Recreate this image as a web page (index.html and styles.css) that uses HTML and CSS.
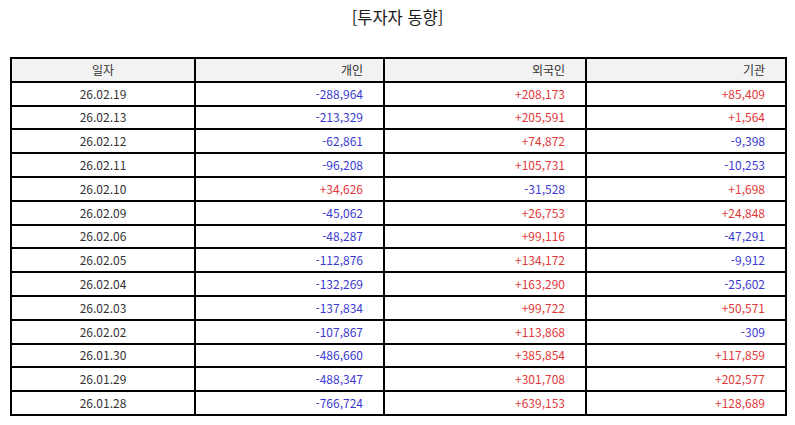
FILE: index.html
```html
<!DOCTYPE html>
<html lang="ko">
<head>
<meta charset="utf-8">
<link rel="stylesheet" href="styles.css">
</head>
<body>
<div class="page">
  <h1 class="title">[투자자 동향]</h1>
  <table class="grid">
    <colgroup>
      <col class="c1"><col class="c2"><col class="c3"><col class="c4">
    </colgroup>
    <thead>
      <tr><th class="date">일자</th><th>개인</th><th>외국인</th><th>기관</th></tr>
    </thead>
    <tbody>
      <tr><td class="date">26.02.19</td><td class="dn">-288,964</td><td class="up">+208,173</td><td class="up">+85,409</td></tr>
      <tr><td class="date">26.02.13</td><td class="dn">-213,329</td><td class="up">+205,591</td><td class="up">+1,564</td></tr>
      <tr><td class="date">26.02.12</td><td class="dn">-62,861</td><td class="up">+74,872</td><td class="dn">-9,398</td></tr>
      <tr><td class="date">26.02.11</td><td class="dn">-96,208</td><td class="up">+105,731</td><td class="dn">-10,253</td></tr>
      <tr><td class="date">26.02.10</td><td class="up">+34,626</td><td class="dn">-31,528</td><td class="up">+1,698</td></tr>
      <tr><td class="date">26.02.09</td><td class="dn">-45,062</td><td class="up">+26,753</td><td class="up">+24,848</td></tr>
      <tr><td class="date">26.02.06</td><td class="dn">-48,287</td><td class="up">+99,116</td><td class="dn">-47,291</td></tr>
      <tr><td class="date">26.02.05</td><td class="dn">-112,876</td><td class="up">+134,172</td><td class="dn">-9,912</td></tr>
      <tr><td class="date">26.02.04</td><td class="dn">-132,269</td><td class="up">+163,290</td><td class="dn">-25,602</td></tr>
      <tr><td class="date">26.02.03</td><td class="dn">-137,834</td><td class="up">+99,722</td><td class="up">+50,571</td></tr>
      <tr><td class="date">26.02.02</td><td class="dn">-107,867</td><td class="up">+113,868</td><td class="dn">-309</td></tr>
      <tr><td class="date">26.01.30</td><td class="dn">-486,660</td><td class="up">+385,854</td><td class="up">+117,859</td></tr>
      <tr><td class="date">26.01.29</td><td class="dn">-488,347</td><td class="up">+301,708</td><td class="up">+202,577</td></tr>
      <tr><td class="date">26.01.28</td><td class="dn">-766,724</td><td class="up">+639,153</td><td class="up">+128,689</td></tr>
    </tbody>
  </table>
</div>
</body>
</html>
```
FILE: styles.css
```css
html, body {
  margin: 0;
  padding: 0;
  background: #ffffff;
}
.page {
  padding: 0 10px;
  font-family: "Noto Sans CJK KR", "Noto Sans", sans-serif;
  color: #333333;
}
.title {
  margin: 0;
  height: 57px;
  padding-top: 5px;
  box-sizing: border-box;
  text-align: center;
  font-size: 16.5px;
  font-weight: normal;
  line-height: 24px;
  color: #1a1a1a;
}
.grid {
  width: 775px;
  border-collapse: collapse;
  table-layout: fixed;
  font-size: 12px;
}
.c1 { width: 184px; }
.c2 { width: 189px; }
.c3 { width: 202px; }
.c4 { width: 200px; }
.grid tr {
  height: 23.8px;
}
.grid th,
.grid td {
  border: 2px solid #000000;
  padding: 0 20px 0 0;
  text-align: right;
  font-weight: normal;
  line-height: 16px;
}
.grid th {
  background: #f2f2f2;
  color: #333333;
}
.grid .date {
  text-align: center;
  padding: 0;
}
.dn { color: #3b3bd0; }
.up { color: #e0393c; }
```
